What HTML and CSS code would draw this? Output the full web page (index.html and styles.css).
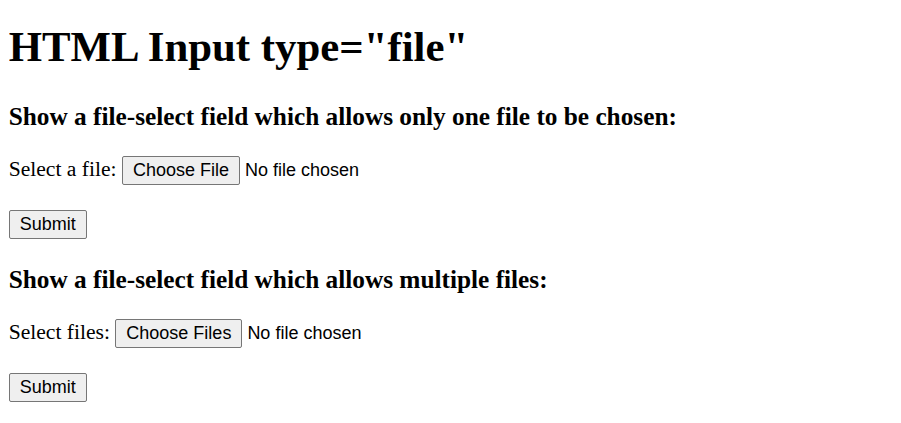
FILE: index.html
```html
<!DOCTYPE html>
<html lang="en">

<head>
  <title>HTML Input type="file"</title>
  <meta name="viewport" content="width=device-width, initial-scale=1.0">
  <link rel="stylesheet" href="styles.css">
</head>

<body>
  <h1>HTML Input type="file"</h1>

  <h3>Show a file-select field which allows only one file to be chosen:</h3>
  <form class="upload" action="#">
    <div class="row">
      <label for="myfile">Select a file:</label>
      <input type="file" id="myfile" name="myfile">
    </div>
    <div class="row">
      <input type="submit" value="Submit">
    </div>
  </form>

  <h3>Show a file-select field which allows multiple files:</h3>
  <form class="upload" action="#">
    <div class="row">
      <label for="myfiles">Select files:</label>
      <input type="file" id="myfiles" name="myfiles" multiple>
    </div>
    <div class="row">
      <input type="submit" value="Submit">
    </div>
  </form>
</body>

</html>
```

FILE: styles.css
```css
body {
  margin: 0 8.7px;
  font-family: "Liberation Serif", "Times New Roman", serif;
  font-size: 21.6px;
  color: #000000;
}

h1 {
  font-size: 42.8px;
  margin: 22.3px 0 30.6px;
}

h3 {
  font-size: 25.3px;
  margin: 26.8px 0 24.8px;
}

.upload {
  display: flex;
  flex-direction: column;
  align-items: flex-start;
  gap: 25px;
  margin: 0;
}

.row {
  display: flex;
  align-items: baseline;
  gap: 5.3px;
}

input,
input[type="file"]::file-selector-button {
  font-family: "Liberation Sans", Arial, sans-serif;
  font-size: 18px;
  color: #000000;
}

input[type="file"]::file-selector-button,
input[type="submit"] {
  background-color: #efefef;
  border: 1px solid #767676;
  border-radius: 2px;
  padding: 3px 10px;
  margin: 0;
}

input[type="file"]::file-selector-button {
  margin-right: 5px;
}
```
